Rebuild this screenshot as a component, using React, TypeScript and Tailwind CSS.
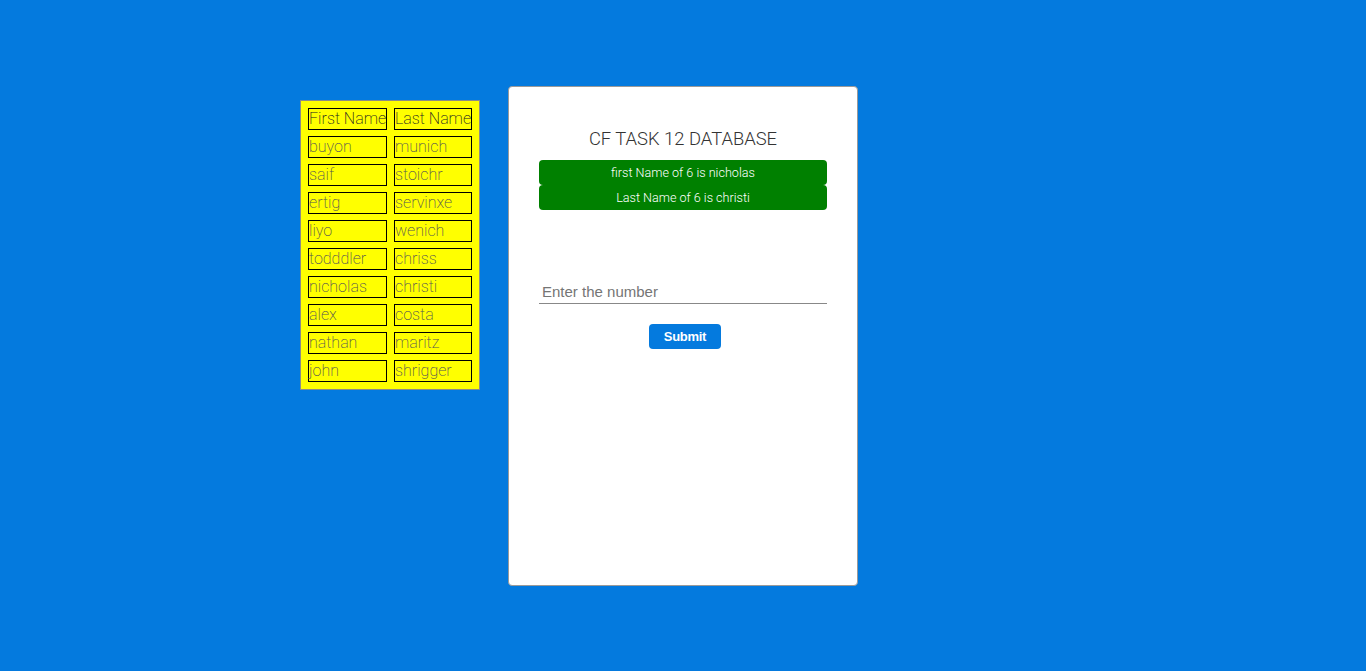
const people = [
  ['buyon', 'munich'],
  ['saif', 'stoichr'],
  ['ertig', 'servinxe'],
  ['liyo', 'wenich'],
  ['todddler', 'chriss'],
  ['nicholas', 'christi'],
  ['alex', 'costa'],
  ['nathan', 'maritz'],
  ['john', 'shrigger'],
];

const roboto = "font-['Roboto',sans-serif] font-light";

export default function App() {
  return (
    <div className="min-h-[671px] w-full bg-[#047ade] pt-[86px] grid grid-cols-[1fr_350px_1fr] items-start">
      <div className="justify-self-end mr-[28px] mt-[14px]">
        <div className="grid grid-cols-[79px_78px] gap-x-[7px] gap-y-[6px] p-[7px] bg-[#ffff00] border border-[#8a8a8a] font-['Roboto',sans-serif] font-extralight">
          <div className="border border-black h-[22px] leading-[20px] text-[16px] text-[#222] whitespace-nowrap overflow-hidden">First Name</div>
          <div className="border border-black h-[22px] leading-[20px] text-[16px] text-[#222] whitespace-nowrap overflow-hidden">Last Name</div>
          {people.map(([f, l]) => (
            <>
              <div key={f} className="border border-black h-[22px] leading-[20px] text-[16px] text-[#555]">{f}</div>
              <div key={l} className="border border-black h-[22px] leading-[20px] text-[16px] text-[#555]">{l}</div>
            </>
          ))}
        </div>
      </div>

      <div className="h-[500px] bg-white border border-[#9a9a9a] rounded-[4px] px-[30px] pt-[41px]">
        <h1 className={`text-center text-[18.4px] leading-[22px] text-[#333] ${roboto}`}>CF TASK 12 DATABASE</h1>
        <div className={`mt-[10px] text-white text-[12.6px] ${roboto}`}>
          <div className="h-[25px] leading-[25px] bg-[#008000] rounded-[4px] text-center">first Name of 6 is nicholas</div>
          <div className="h-[25px] leading-[25px] bg-[#008000] rounded-[4px] text-center">Last Name of 6 is christi</div>
        </div>
        <input
          placeholder="Enter the number"
          className="mt-[70px] w-full h-[24px] border-b border-[#888] px-[3px] font-['Liberation_Sans',Arial,sans-serif] text-[15px] placeholder:text-[#757575] outline-none"
        />
        <div className="flex justify-center pl-[4px] mt-[20px]">
          <button className="w-[72px] h-[25px] bg-[#047ade] rounded-[4px] text-white text-[13px] tracking-[-0.3px] font-['Liberation_Sans',Arial,sans-serif] font-semibold">
            Submit
          </button>
        </div>
      </div>
      <div />
    </div>
  );
}
